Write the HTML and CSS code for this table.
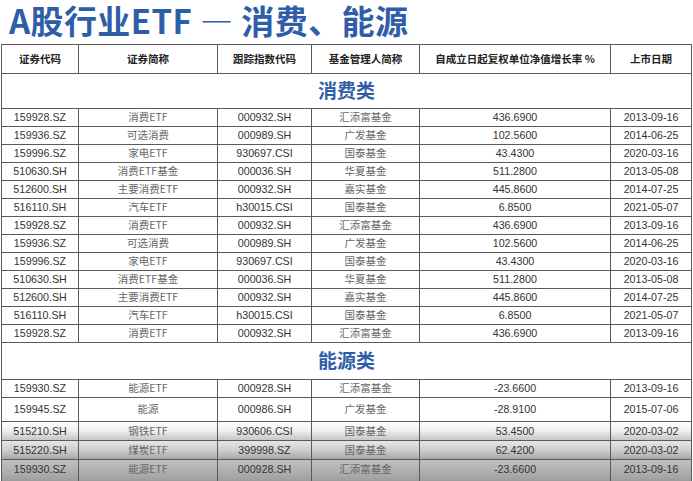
FILE: index.html
```html
<!DOCTYPE html>
<html lang="zh-CN">
<head>
<meta charset="utf-8">
<title>A股行业ETF — 消费、能源</title>
<link rel="stylesheet" href="styles.css">
</head>
<body>
<h1 class="title">A股行业ETF — 消费、能源</h1>
<table class="etf">
  <colgroup>
    <col class="c1"><col class="c2"><col class="c3"><col class="c4"><col class="c5"><col class="c6">
  </colgroup>
  <thead>
    <tr class="head">
      <th>证券代码</th><th>证券简称</th><th>跟踪指数代码</th><th>基金管理人简称</th><th>自成立日起复权单位净值增长率 %</th><th>上市日期</th>
    </tr>
  </thead>
  <tbody>
    <tr class="section"><td colspan="6">消费类</td></tr>
    <tr class="row"><td>159928.SZ</td><td class="cn">消费ETF</td><td>000932.SH</td><td class="cn">汇添富基金</td><td>436.6900</td><td>2013-09-16</td></tr>
    <tr class="row"><td>159936.SZ</td><td class="cn">可选消费</td><td>000989.SH</td><td class="cn">广发基金</td><td>102.5600</td><td>2014-06-25</td></tr>
    <tr class="row"><td>159996.SZ</td><td class="cn">家电ETF</td><td>930697.CSI</td><td class="cn">国泰基金</td><td>43.4300</td><td>2020-03-16</td></tr>
    <tr class="row"><td>510630.SH</td><td class="cn">消费ETF基金</td><td>000036.SH</td><td class="cn">华夏基金</td><td>511.2800</td><td>2013-05-08</td></tr>
    <tr class="row"><td>512600.SH</td><td class="cn">主要消费ETF</td><td>000932.SH</td><td class="cn">嘉实基金</td><td>445.8600</td><td>2014-07-25</td></tr>
    <tr class="row"><td>516110.SH</td><td class="cn">汽车ETF</td><td>h30015.CSI</td><td class="cn">国泰基金</td><td>6.8500</td><td>2021-05-07</td></tr>
    <tr class="row"><td>159928.SZ</td><td class="cn">消费ETF</td><td>000932.SH</td><td class="cn">汇添富基金</td><td>436.6900</td><td>2013-09-16</td></tr>
    <tr class="row"><td>159936.SZ</td><td class="cn">可选消费</td><td>000989.SH</td><td class="cn">广发基金</td><td>102.5600</td><td>2014-06-25</td></tr>
    <tr class="row"><td>159996.SZ</td><td class="cn">家电ETF</td><td>930697.CSI</td><td class="cn">国泰基金</td><td>43.4300</td><td>2020-03-16</td></tr>
    <tr class="row"><td>510630.SH</td><td class="cn">消费ETF基金</td><td>000036.SH</td><td class="cn">华夏基金</td><td>511.2800</td><td>2013-05-08</td></tr>
    <tr class="row"><td>512600.SH</td><td class="cn">主要消费ETF</td><td>000932.SH</td><td class="cn">嘉实基金</td><td>445.8600</td><td>2014-07-25</td></tr>
    <tr class="row"><td>516110.SH</td><td class="cn">汽车ETF</td><td>h30015.CSI</td><td class="cn">国泰基金</td><td>6.8500</td><td>2021-05-07</td></tr>
    <tr class="row"><td>159928.SZ</td><td class="cn">消费ETF</td><td>000932.SH</td><td class="cn">汇添富基金</td><td>436.6900</td><td>2013-09-16</td></tr>
    <tr class="section section-energy"><td colspan="6">能源类</td></tr>
    <tr class="row"><td>159930.SZ</td><td class="cn">能源ETF</td><td>000928.SH</td><td class="cn">汇添富基金</td><td>-23.6600</td><td>2013-09-16</td></tr>
    <tr class="row tall"><td>159945.SZ</td><td class="cn">能源</td><td>000986.SH</td><td class="cn">广发基金</td><td>-28.9100</td><td>2015-07-06</td></tr>
    <tr class="row mid shade1"><td>515210.SH</td><td class="cn">钢铁ETF</td><td>930606.CSI</td><td class="cn">国泰基金</td><td>53.4500</td><td>2020-03-02</td></tr>
    <tr class="row mid shade2"><td>515220.SH</td><td class="cn">煤炭ETF</td><td>399998.SZ</td><td class="cn">国泰基金</td><td>62.4200</td><td>2020-03-02</td></tr>
    <tr class="row last shade3"><td>159930.SZ</td><td class="cn">能源ETF</td><td>000928.SH</td><td class="cn">汇添富基金</td><td>-23.6600</td><td>2013-09-16</td></tr>
  </tbody>
</table>
</body>
</html>
```

FILE: styles.css
```css
html, body {
  margin: 0;
  padding: 0;
  background: #ffffff;
}

body {
  width: 693px;
  height: 481px;
  overflow: hidden;
  font-family: "Liberation Sans", Arial, "Noto Sans CJK SC", sans-serif;
}

.title {
  margin: 0;
  padding: 0 0 4px 9px;
  font-family: "Noto Sans CJK SC", sans-serif;
  font-weight: 700;
  font-size: 33px;
  line-height: 40px;
  color: #2f5ea8;
  letter-spacing: 0.4px;
  white-space: nowrap;
}

.etf {
  margin-left: 1px;
  width: 690px;
  border-collapse: collapse;
  table-layout: fixed;
  border: 1.5px solid #555;
}

.c1 { width: 77px; }
.c2 { width: 139px; }
.c3 { width: 94px; }
.c4 { width: 108px; }
.c5 { width: 191px; }
.c6 { width: 81px; }

.etf th,
.etf td {
  border: 1px solid #5a5a5a;
  padding: 0;
  text-align: center;
  vertical-align: middle;
  white-space: nowrap;
  overflow: hidden;
}

.head th {
  height: 27px;
  padding-bottom: 1px;
  font-family: "Noto Sans CJK SC", sans-serif;
  font-weight: 700;
  font-size: 10.5px;
  color: #222;
}

.section td {
  height: 31px;
  padding-bottom: 3px;
  font-family: "Noto Sans CJK SC", sans-serif;
  font-weight: 700;
  font-size: 19px;
  color: #2f5ea8;
  line-height: 1;
}

.section-energy td {
  height: 32px;
  padding-bottom: 4px;
}

.row td {
  height: 17px;
  font-size: 10.7px;
  line-height: 1;
  color: #333;
}

.row td.cn {
  font-family: "Noto Sans CJK SC", sans-serif;
  color: #666;
  font-size: 10.5px;
}

.row.tall td { height: 23px; }
.row.mid td { height: 18px; }
.row.last td {
  height: 24px;
  vertical-align: top;
  padding-top: 4px;
}

.shade1 {
  background: linear-gradient(#ffffff 0%, #efefef 45%, #c2c2c2 100%);
}
.shade2 {
  background: linear-gradient(#e6e6e6 0%, #d0d0d0 45%, #a4a4a4 100%);
}
.shade3 {
  background: linear-gradient(#c0c0c0 0%, #a8a8a8 55%, #8a8a8a 100%);
}
```
